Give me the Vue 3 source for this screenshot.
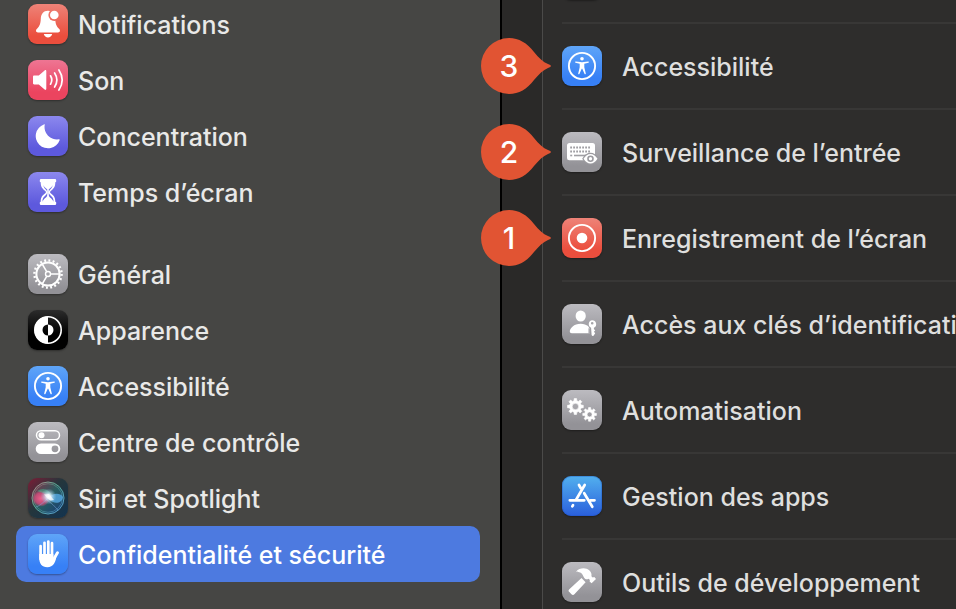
<script setup>
const sidebarGroups = [
  [
    { label: 'Notifications', icon: 'bell', tone: 'red' },
    { label: 'Son', icon: 'sound', tone: 'pink' },
    { label: 'Concentration', icon: 'moon', tone: 'indigo' },
    { label: 'Temps d’écran', icon: 'hourglass', tone: 'indigo' }
  ],
  [
    { label: 'Général', icon: 'gear', tone: 'gray' },
    { label: 'Apparence', icon: 'contrast', tone: 'black' },
    { label: 'Accessibilité', icon: 'person', tone: 'blue' },
    { label: 'Centre de contrôle', icon: 'toggles', tone: 'gray' },
    { label: 'Siri et Spotlight', icon: 'siri', tone: 'siri' },
    { label: 'Confidentialité et sécurité', icon: 'hand', tone: 'blue', selected: true }
  ]
]

const permissions = [
  { label: 'Accessibilité', icon: 'person', tone: 'blue', step: 3 },
  { label: 'Surveillance de l’entrée', icon: 'keyboard', tone: 'gray', step: 2 },
  { label: 'Enregistrement de l’écran', icon: 'record', tone: 'red', step: 1 },
  { label: 'Accès aux clés d’identification', icon: 'userKey', tone: 'gray' },
  { label: 'Automatisation', icon: 'gears', tone: 'gray' },
  { label: 'Gestion des apps', icon: 'apps', tone: 'store' },
  { label: 'Outils de développement', icon: 'hammer', tone: 'gray' }
]

// Closed outline of a cog with flat teeth, plus a round hole
function cog(cx, cy, outer, inner, hole, teeth) {
  const step = (Math.PI * 2) / teeth
  const points = []
  for (let i = 0; i < teeth; i++) {
    const a = i * step
    for (const [r, t] of [[inner, -0.3], [outer, -0.19], [outer, 0.19], [inner, 0.3]]) {
      points.push(`${(cx + r * Math.cos(a + t * step)).toFixed(2)} ${(cy + r * Math.sin(a + t * step)).toFixed(2)}`)
    }
  }
  return `M${points.join('L')}ZM${cx - hole} ${cy}a${hole} ${hole} 0 1 0 ${hole * 2} 0a${hole} ${hole} 0 1 0 ${-hole * 2} 0Z`
}

const keys = [14.5, 18.5]
  .flatMap((y) => [0, 1, 2, 3, 4, 5, 6].map((i) => `<rect x="${8.2 + i * 3}" y="${y}" width="1.8" height="2"/>`))
  .join('')

const icons = {
  bell: `<mask id="bell-cut"><rect width="40" height="40" fill="#fff"/><circle cx="26.3" cy="11" r="5.9" fill="#000"/></mask>
    <path mask="url(#bell-cut)" d="M20 6.8c-4.6 0-7 3.4-7.2 7.8-.2 5-1 7.400-3.800 10.200-1.700 1.600-1 3.600.9 3.600h20.200c1.900 0 2.600-2 .9-3.600-2.800-2.800-3.600-5.200-3.800-10.200-.2-4.400-2.600-7.800-7.200-7.800z"/>
    <circle cx="26.3" cy="11" r="4.3"/><path d="M15.8 30h8.400c-.6 2.200-2.200 3.600-4.200 3.600s-3.600-1.400-4.200-3.600z"/>`,
  sound: `<path d="M6.200 15.600h4.600l5.800-5.200c.8-.7 1.700-.3 1.700.8v17.600c0 1.100-.9 1.500-1.700.8l-5.800-5.200H6.200c-.8 0-1.200-.5-1.200-1.200v-6.400c0-.7.4-1.200 1.200-1.200z"/>
    <path d="M22.500 15.800q2.600 4.200 0 8.400M26.600 13q4.600 7 0 14M30.900 10q6.600 10 0 20" fill="none" stroke="#fff" stroke-width="1.700" stroke-linecap="round"/>`,
  moon: `<path d="M15.800 8.500A12.300 12.300 0 1 0 31.600 24.200c.3-.7-.1-1.200-.9-.9A12.400 12.400 0 0 1 16.700 8.900c.2-.8-.3-.8-.9-.4z"/>`,
  hourglass: `<path fill-rule="evenodd" d="M13 7h14q1.200 0 1.200 1.200v1.300q0 .8-.9.8c0 5-2 6.700-4.600 8.600-.8.700-.8 1.700 0 2.400 2.600 1.900 4.600 3.600 4.600 8.400q.9 0 .9.800v1.300Q28.200 33 27 33H13q-1.200 0-1.200-1.200v-1.300q0-.8.9-.8c0-4.800 2-6.500 4.600-8.400.8-.7.8-1.700 0-2.400-2.600-1.900-4.600-3.600-4.600-8.600q-.9 0-.9-.8V8.200Q11.800 7 13 7zM15.300 13c.8 2.200 2.500 3.200 3.900 4.300v5.600c0 2.600-3.700 3.400-4.800 6.800 0-3.500 1.600-5 3.700-6.900 1.400-1.200 1.400-3.700 0-5-1.200-1-2.300-2.300-2.800-4.800zM24.700 13c-.8 2.200-2.500 3.200-3.900 4.300v5.600c0 2.600 3.700 3.400 4.800 6.800 0-3.500-1.600-5-3.700-6.900-1.400-1.200-1.400-3.700 0-5 1.200-1 2.300-2.300 2.800-4.800z"/>`,
  gear: `<g fill="none" stroke="#fff"><circle cx="20" cy="20" r="11.600" stroke-width="2"/>
    <circle cx="20" cy="20" r="13.600" stroke-width="2.400" stroke-dasharray="1.900 2.373"/>
    <circle cx="20" cy="20" r="2.500" stroke-width="1.400"/>
    <path d="M22.600 20H31M18.700 17.700l-4.500-7.700M18.700 22.300l-4.500 7.700" stroke-width="1.500"/></g>`,
  contrast: `<circle cx="20" cy="20" r="13.200" fill="none" stroke="#fff" stroke-width="1.600"/><path d="M20 6.500a13.500 13.500 0 0 0 0 27v-8a5.500 5.500 0 0 1 0-11zM20 14.500a5.500 5.500 0 0 1 0 11z"/>`,
  person: `<circle cx="20" cy="20" r="13.100" fill="none" stroke="#fff" stroke-width="1.900"/><circle cx="20" cy="12.700" r="1.800"/>
    <path d="M13.800 15.500l4.400.6q1.800.2 3.600 0l4.400-.6c.8-.1 1 .9.200 1.200l-4.100 1v3.500l1.500 6.300c.2.800-.9 1.100-1.200.4L20.400 23q-.4-.8-.8 0l-2.200 4.900c-.3.7-1.400.4-1.200-.4l1.500-6.300v-3.500l-4.100-1c-.8-.3-.6-1.300.2-1.200z"/>`,
  toggles: `<rect x="8.500" y="8.800" width="23" height="9" rx="4.500" fill="none" stroke="#fff" stroke-width="1.500"/><circle cx="13.500" cy="13.300" r="3"/>
    <path fill-rule="evenodd" d="M13 21.500h14a5.300 5.300 0 0 1 0 10.600H13a5.300 5.300 0 0 1 0-10.600zM27 23.400a3.400 3.400 0 1 0 0 6.800a3.400 3.400 0 1 0 0-6.800z"/>`,
  siri: `<defs><radialGradient id="siri-core"><stop offset="0" stop-color="#fff"/><stop offset=".3" stop-color="#e8f4ff" stop-opacity=".85"/><stop offset="1" stop-color="#8fc8e8" stop-opacity="0"/></radialGradient>
    <linearGradient id="siri-ring" x1="0" y1="0" x2="1" y2="1"><stop offset="0" stop-color="#b9858a"/><stop offset=".4" stop-color="#5cab91"/><stop offset="1" stop-color="#559bd8"/></linearGradient>
    <linearGradient id="siri-orb" x1="0" y1="0" x2="1" y2="1"><stop offset="0" stop-color="#8b3048"/><stop offset=".5" stop-color="#285d60"/><stop offset="1" stop-color="#173a78"/></linearGradient>
    <radialGradient id="siri-pink"><stop offset="0" stop-color="#f0608c"/><stop offset=".7" stop-color="#d84c7c" stop-opacity=".8"/><stop offset="1" stop-color="#d84c7c" stop-opacity=".1"/></radialGradient></defs>
    <circle cx="20" cy="20" r="16" fill="url(#siri-orb)" stroke="url(#siri-ring)" stroke-width="1"/>
    <circle cx="20" cy="20" r="14.300" fill="none" stroke="url(#siri-ring)" stroke-width=".7" opacity=".7"/>
    <ellipse cx="13" cy="20.500" rx="8.500" ry="8" fill="url(#siri-pink)"/>
    <path d="M9 13q10-6 16 6c-4-2-10-4-16-6z" fill="#4ec79a" opacity=".45"/>
    <path d="M20 20c4-5 12-6 15-1-1 7-10 8-15 1z" fill="#5ab0ec" opacity=".75"/>
    <path d="M18 21q8 6 12 11M20 20q-8 8-12 9" fill="none" stroke="#7fa8df" opacity=".5"/>
    <circle cx="20.500" cy="18.500" r="8" fill="url(#siri-core)"/><path d="M16 16.500l5-.5 5 6-4 .5z" fill="#fff" opacity=".7"/>`,
  hand: `<g fill="none" stroke="#fff" stroke-linecap="round"><path d="M12.600 12v13M16.500 8.800V25M20.300 7.500V25M24 9.200V25" stroke-width="2.700"/><path d="M24 28l5.500-9.300" stroke-width="2.900"/></g>
    <path d="M11.250 20h14.100v4.500l3-3c0 6-3.200 11.800-9 11.800-5.600 0-8.100-4-8.100-9z"/>`,
  keyboard: `<rect x="5" y="11" width="28" height="17.200" rx="2.500"/><g fill="#a09fa4">${keys}<rect x="8.200" y="22.700" width="2" height="1.600"/><rect x="12" y="22.700" width="12" height="1.600"/></g>
    <path d="M20.200 26.700q3.500-5.900 8.300-5.900t8.300 5.900q-3.500 5.900-8.300 5.900t-8.300-5.900z" fill="#9b9a9f"/>
    <path fill-rule="evenodd" d="M21.500 26.700q3-4.700 7-4.700t7 4.700q-3 4.700-7 4.700t-7-4.700zM28.500 23.400a3.300 3.300 0 1 0 0 6.600a3.300 3.300 0 1 0 0-6.600z"/><circle cx="28.500" cy="26.700" r="1.700"/>`,
  record: `<circle cx="20" cy="20" r="13.100" fill="none" stroke="#fff" stroke-width="1.900"/><circle cx="20" cy="20" r="5.300"/>`,
  userKey: `<ellipse cx="18.700" cy="12" rx="5.100" ry="5.600"/><path d="M9.800 29.200c-1.200 0-2-.6-2-1.700 0-3.300 4.100-7.800 10.900-7.800 3.200 0 5.600 1 7.400 2.300.4 1.200 1.100 2 1.900 2.600v4.600z"/>
    <path d="M26.500 29.500v-5.300h1.400v5.300z" fill="#a1a0a5"/>
    <path fill-rule="evenodd" d="M30.200 16.200a4 4 0 0 1 1.700 7.600v1.300l1.300 1.300-1.300 1.400 1.300 1.400-1.700 2.600q-1.100.8-1.900-.7l-.5-7.300a4 4 0 0 1 1.100-7.600zM30.200 18a1.300 1.300 0 1 0 0 2.600a1.300 1.300 0 1 0 0-2.600z"/>`,
  gears: `<path fill-rule="evenodd" stroke="#fff" stroke-width=".6" stroke-linejoin="round" d="${cog(13.4, 16.5, 8, 5.9, 3.2, 8)}"/><path fill-rule="evenodd" stroke="#fff" stroke-width=".6" stroke-linejoin="round" d="${cog(27.6, 24.4, 6.9, 5, 2.5, 8)}"/>`,
  apps: `<g fill="none" stroke="#fff" stroke-width="2.700" stroke-linecap="round"><path d="M22.700 9L13.800 24.300M17 9l1.700 3M22.200 17.200l8.100 13.600M11 29.200l-.7 1.200M7.800 24.300h14.500M28.500 24.300h4"/></g>`,
  hammer: `<path d="M7.300 27.200l12.200-11.100 4.100 4.100-11.200 12.100c-1.300 1.300-2.300.5-3.200-.4l-1.800-1.800c-1-1-1.200-1.900-.1-2.900z"/>
    <path d="M14.200 9.500c3-3.500 9.400-4.500 13.300-1 2 1.900 2.300 4 1.900 5.700l1.300 1.200 1.600-.5 1.700 2-4.400 4.400-2-1.800.3-1.500-1.300-1.200c-2.100 1.200-3.300.3-4.300-.9-1.600-1.700-1.600-4.500-4-5.300-1.300-.5-2.700-.4-4.100-1.100z"/>`
}
</script>

<template>
  <div class="window">
    <nav class="sidebar">
      <ul v-for="(group, g) in sidebarGroups" :key="g" class="group">
        <li v-for="item in group" :key="item.label">
          <a href="#" class="nav-item" :class="{ selected: item.selected }">
            <span class="tile" :class="item.tone"><svg viewBox="0 0 40 40" aria-hidden="true" v-html="icons[item.icon]"></svg></span>
            <span class="label">{{ item.label }}</span>
          </a>
        </li>
      </ul>
    </nav>

    <main class="pane">
      <ul class="card">
        <li class="row-end"><span class="tile black"></span></li>
        <li v-for="item in permissions" :key="item.label" class="row">
          <a href="#" class="row-link">
            <span class="tile" :class="item.tone"><svg viewBox="0 0 40 40" aria-hidden="true" v-html="icons[item.icon]"></svg></span>
            <span class="label">{{ item.label }}</span>
          </a>
          <span v-if="item.step" class="marker">
            <svg viewBox="0 0 70 56" aria-hidden="true">
              <path d="M28 0C38 0 46 5 53 14C58 20 62 24 67 26Q70 27 70 28T67 30C62 32 58 36 53 42C46 51 38 56 28 56A28 28 0 0 1 28 0Z" />
            </svg>
            <span class="marker-number">{{ item.step }}</span>
          </span>
        </li>
      </ul>
    </main>
  </div>
</template>

<style>
body {
  margin: 0;
  background: #2a2928;
}
</style>

<style scoped>
.window {
  display: grid;
  grid-template-columns: minmax(0, 502px) minmax(0, 1fr);
  height: 100vh;
  overflow: hidden;
  font-family: Inter, "Liberation Sans", sans-serif;
  font-size: 25px;
  font-weight: 500;
  line-height: 32px;
  color: #e9e9e8;
  background: #2a2928;
}

ul {
  list-style: none;
  margin: 0;
  padding: 0;
}

a {
  color: inherit;
  text-decoration: none;
}

.sidebar {
  display: flex;
  flex-direction: column;
  gap: 26px;
  margin-top: -4px;
  padding: 0 20px 0 16px;
  background: #464644;
  border-right: 2px solid #000;
}

.nav-item {
  display: flex;
  align-items: center;
  gap: 10px;
  height: 56px;
  padding: 0 12px;
  border-radius: 10px;
  white-space: nowrap;
}

.nav-item.selected {
  background: #4d7ae0;
  color: #fff;
}

.label {
  padding-top: 2px;
}

.tile {
  flex: none;
  width: 40px;
  height: 40px;
  border-radius: 9px;
  box-shadow: 0 1px 2px rgba(0, 0, 0, 0.35);
}

.tile svg {
  display: block;
  width: 40px;
  height: 40px;
  fill: #fff;
}

.red {
  background: linear-gradient(#ee8378, #eb4e3d 80%);
}

.pink {
  background: linear-gradient(#ee7593, #eb445f 80%);
}

.indigo {
  background: linear-gradient(#8c88ee, #5d59dd 80%);
}

.gray {
  background: linear-gradient(#bcbbc0, #939297 85%);
}

.black {
  background: linear-gradient(#2c2c2c, #000 60%);
}

.blue {
  background: linear-gradient(#5fa5f8, #3780f6 80%);
}

.store {
  background: linear-gradient(#52b0ee, #2a5fdc);
  box-shadow: inset 0 0 0 1px rgba(30, 80, 190, 0.35), 0 1px 2px rgba(0, 0, 0, 0.35);
}

.siri {
  background: linear-gradient(135deg, #7d1c35, #24363c 45%, #123350);
}

.pane {
  padding-left: 40px;
}

.card {
  height: 100%;
  padding-left: 19px;
  background: #2e2d2c;
  border-left: 1px solid #4b4a49;
  color: #dfdfde;
}

.row-end {
  display: flex;
  height: 22px;
}

.row-end .tile {
  margin-top: -40px;
}

.row {
  position: relative;
  border-top: 2px solid #383736;
}

.row-link {
  display: flex;
  align-items: center;
  gap: 20px;
  height: 84px;
  white-space: nowrap;
}

.marker {
  position: absolute;
  top: 14px;
  left: -81px;
  width: 70px;
  height: 56px;
}

.marker svg {
  display: block;
  width: 70px;
  height: 56px;
  fill: #e15433;
}

.marker-number {
  position: absolute;
  inset: 0 14px 0 0;
  font-size: 30px;
  line-height: 56px;
  text-align: center;
  color: #fff;
}
</style>
